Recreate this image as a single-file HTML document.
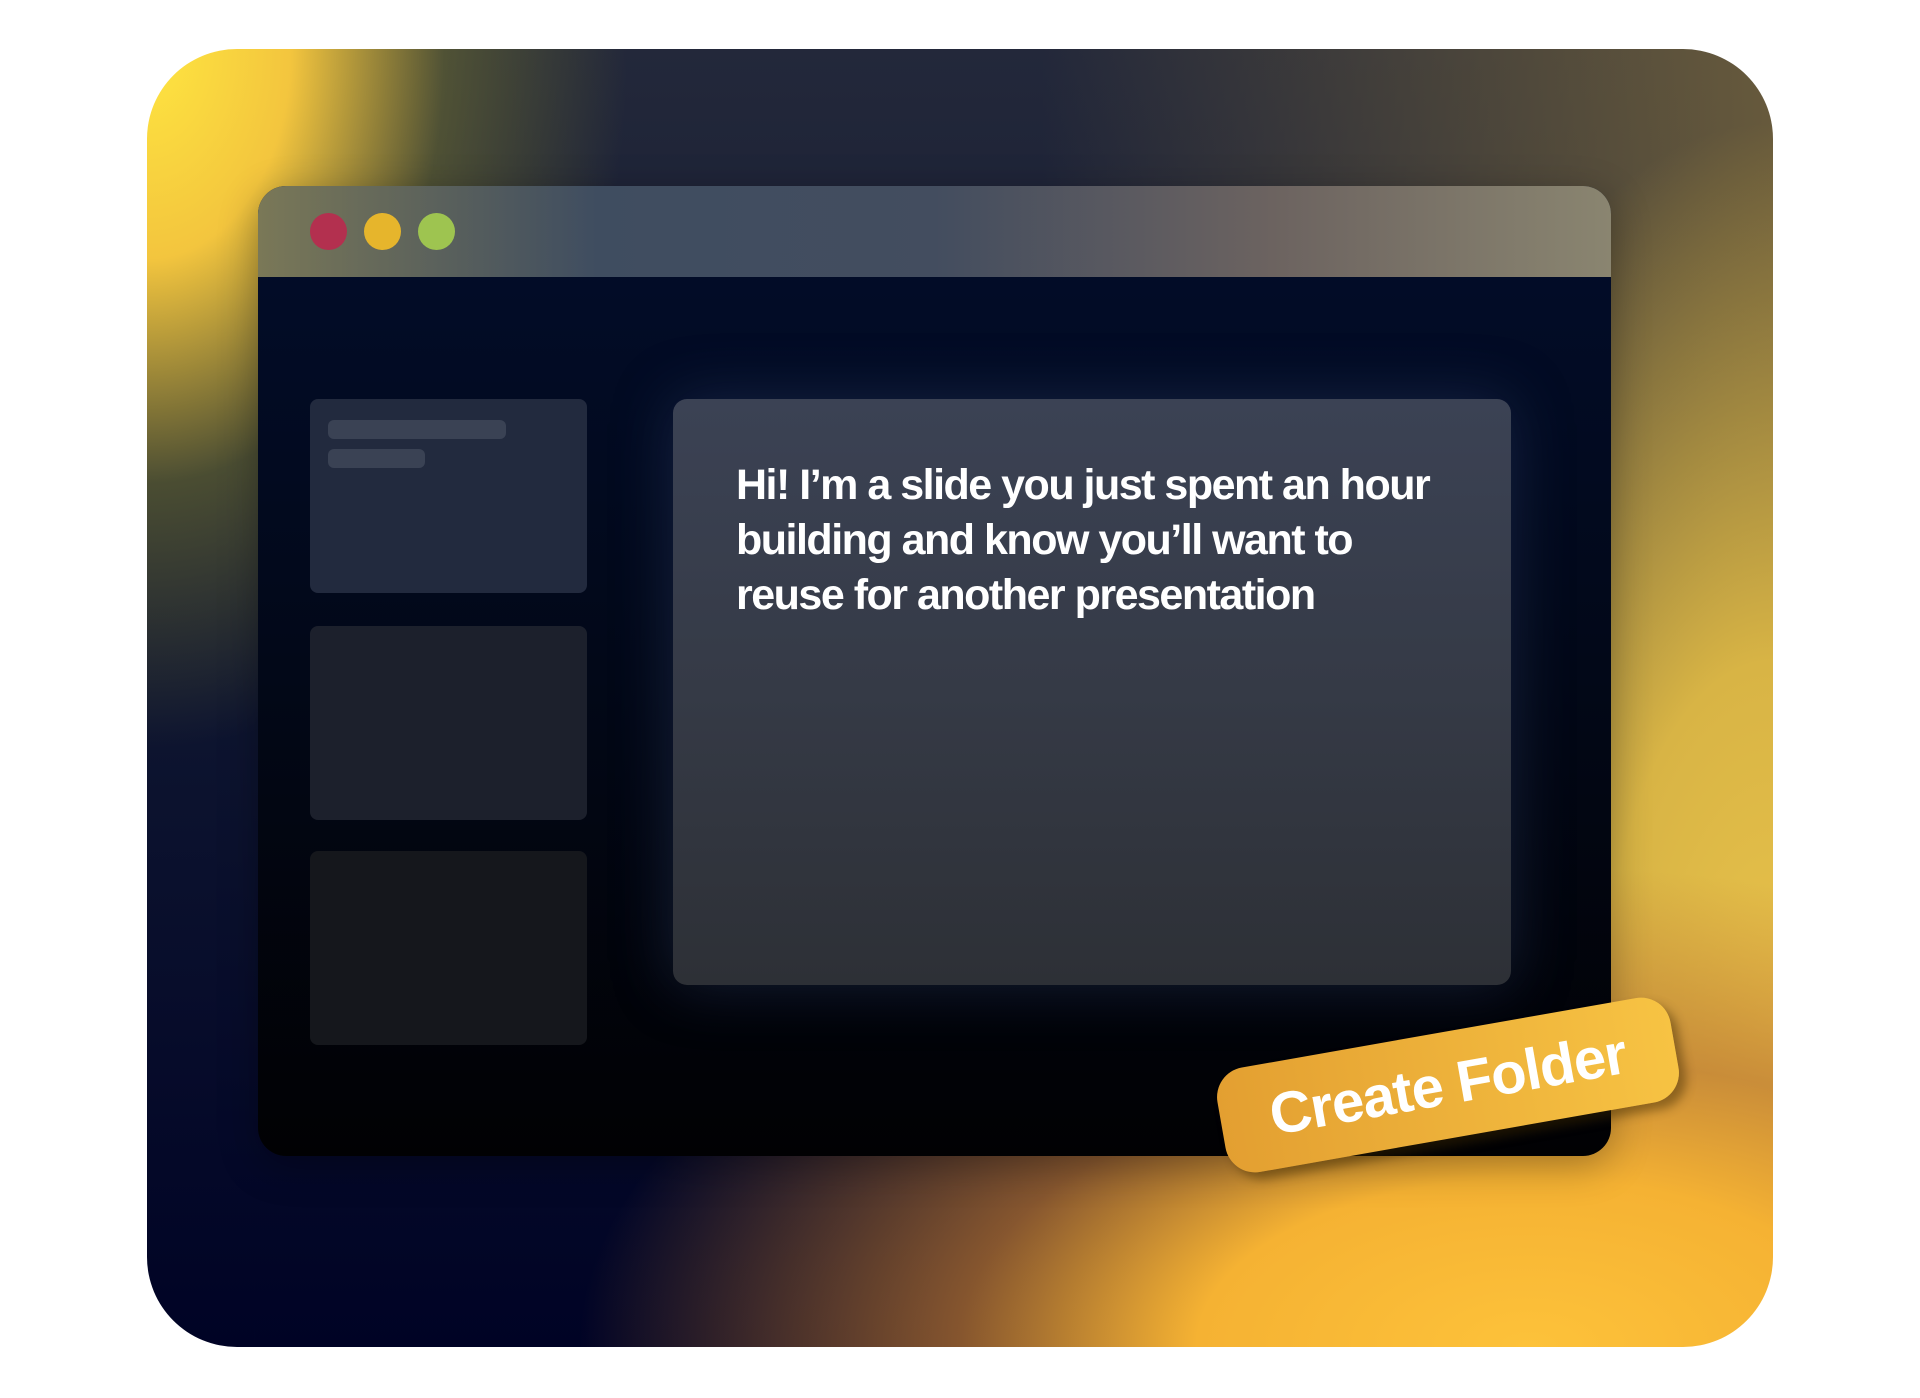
<!DOCTYPE html>
<html><head><style>
html,body{margin:0;padding:0;background:#fff;width:1920px;height:1398px;overflow:hidden;font-family:"Liberation Sans",sans-serif}
.card{position:absolute;left:147px;top:49px;width:1626px;height:1298px;border-radius:90px;overflow:hidden;
background:
radial-gradient(ellipse 480px 700px at 0% 0%, #ffe640 0%, #f3c53e 30%, rgba(110,110,50,0.6) 62%, rgba(30,40,50,0) 100%),
radial-gradient(ellipse 950px 480px at 85% 100%, #fdc23a 0%, #f5b233 35%, rgba(190,120,50,0.7) 60%, rgba(20,10,30,0) 100%),
radial-gradient(ellipse 420px 900px at 100% 75%, #e8c24a 0%, #d8b445 40%, rgba(150,130,70,0) 100%),
linear-gradient(90deg, rgba(0,0,0,0) 55%, rgba(110,95,60,0.9) 100%),
linear-gradient(180deg, #23283a 0%, #0e1530 50%, #000325 100%);}
.win{position:absolute;left:258px;top:186px;width:1353px;height:970px;border-radius:28px;overflow:hidden;
background:linear-gradient(180deg,#020d2b 0%,#020818 50%,#010103 100%);box-shadow:0 10px 40px rgba(0,0,0,.3)}
.bar{height:91px;background:linear-gradient(90deg,#7a7857 0%,#3f4d60 25%,#434d5f 50%,#6c6360 75%,#8a8570 100%)}
.dot{position:absolute;top:213px;width:37px;height:37px;border-radius:50%}
.side{position:absolute;left:310px;width:277px;height:194px;border-radius:8px}
.slide{position:absolute;left:673px;top:399px;width:838px;height:586px;border-radius:14px;
background:linear-gradient(180deg,#3b4254 0%,#353a46 50%,#2d3036 100%);box-shadow:0 0 60px rgba(60,80,130,.35)}
.txt{position:absolute;left:736px;top:458px;width:705px;color:#fff;font-weight:bold;font-size:43px;line-height:55px;letter-spacing:-1.5px}
.btn{position:absolute;left:1218px;top:1032px;width:460px;height:106px;border-radius:30px;transform:rotate(-10deg);
background:linear-gradient(90deg,#e39f31,#f7c343);box-shadow:6px 8px 10px rgba(60,40,0,.45);
color:#fff;font-weight:bold;font-size:58px;line-height:106px;text-align:center;letter-spacing:-1px}
</style></head><body>
<div class="card"></div>
<div class="win"><div class="bar"></div></div>
<div class="dot" style="left:310px;background:#b3304f"></div>
<div class="dot" style="left:364px;background:#e6b52c"></div>
<div class="dot" style="left:418px;background:#9ec450"></div>
<div class="side" style="top:399px;background:#222a3e"></div>
<div style="position:absolute;left:328px;top:420px;width:178px;height:19px;border-radius:6px;background:#3a4254"></div>
<div style="position:absolute;left:328px;top:449px;width:97px;height:19px;border-radius:6px;background:#3a4254"></div>
<div class="side" style="top:626px;background:#1c202c"></div>
<div class="side" style="top:851px;background:#15171c"></div>
<div class="slide"></div>
<div class="txt">Hi! I’m a slide you just spent an hour building and know you’ll want to reuse for another presentation</div>
<div class="btn">Create Folder</div>
</body></html>
